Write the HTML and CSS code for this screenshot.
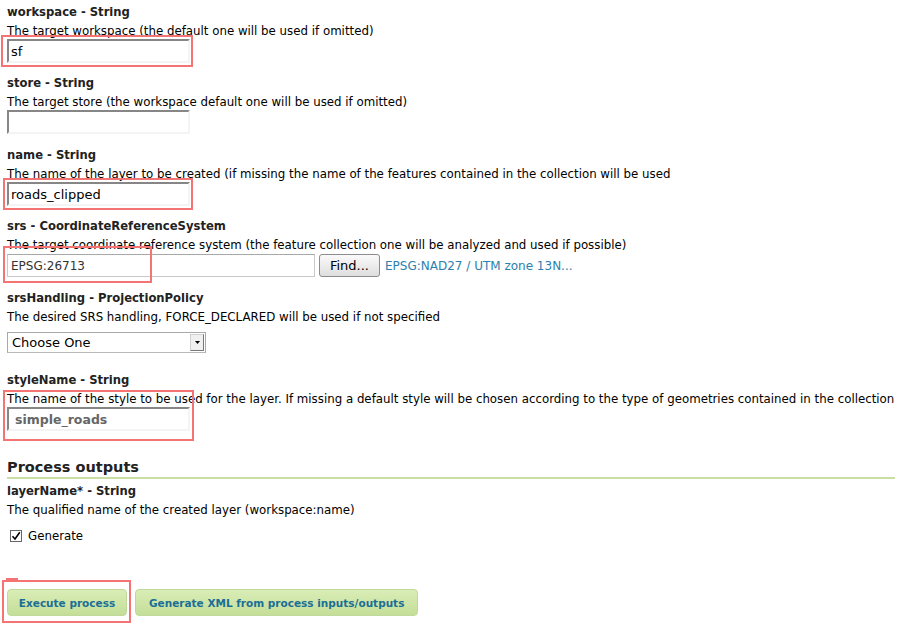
FILE: index.html
```html
<!DOCTYPE html>
<html>
<head>
<meta charset="utf-8">
<link rel="stylesheet" href="styles.css">
</head>
<body>
<div class="page">
  <div class="field short">
    <div class="title">workspace - String</div>
    <div class="desc">The target workspace (the default one will be used if omitted)</div>
    <input class="text" type="text" value="sf">
  </div>
  <div class="field">
    <div class="title">store - String</div>
    <div class="desc">The target store (the workspace default one will be used if omitted)</div>
    <input class="text" type="text" value="">
  </div>
  <div class="field short">
    <div class="title">name - String</div>
    <div class="desc">The name of the layer to be created (if missing the name of the features contained in the collection will be used</div>
    <input class="text" type="text" value="roads_clipped">
  </div>
  <div class="field">
    <div class="title">srs - CoordinateReferenceSystem</div>
    <div class="desc">The target coordinate reference system (the feature collection one will be analyzed and used if possible)</div>
    <div class="srs-row">
      <input class="text srs" type="text" value="EPSG:26713">
      <button class="find">Find...</button>
      <a class="crs-link" href="#">EPSG:NAD27 / UTM zone 13N...</a>
    </div>
  </div>
  <div class="field handling">
    <div class="title">srsHandling - ProjectionPolicy</div>
    <div class="desc">The desired SRS handling, FORCE_DECLARED will be used if not specified</div>
    <div class="select">
      <span class="select-label">Choose One</span>
      <span class="select-arrow"><svg width="5" height="3" viewBox="0 0 5 3"><path d="M0 0h5L2.5 3z" fill="#000"/></svg></span>
    </div>
  </div>
  <div class="field">
    <div class="title">styleName - String</div>
    <div class="desc">The name of the style to be used for the layer. If missing a default style will be chosen according to the type of geometries contained in the collection</div>
    <input class="text style" type="text" value="simple_roads">
  </div>

  <h2 class="section">Process outputs</h2>
  <div class="output">
    <div class="title">layerName* - String</div>
    <div class="desc">The qualified name of the created layer (workspace:name)</div>
    <label class="check"><span class="box"><svg width="10" height="10" viewBox="0 0 10 10"><path d="M1.5 5.2 L4 8 L8.8 1.2" fill="none" stroke="#000" stroke-width="1.6"/></svg></span>Generate</label>
  </div>

  <div class="actions">
    <button class="action exec">Execute process</button>
    <button class="action">Generate XML from process inputs/outputs</button>
  </div>
</div>

<div class="mark m1"></div>
<div class="mark m2"></div>
<div class="mark m3"></div>
<div class="mark m4"></div>
<div class="mark m5"></div>
<div class="mark m5s"></div>
</body>
</html>
```
FILE: styles.css
```css
html, body {
  margin: 0;
  padding: 0;
  background: #fff;
}
body {
  font-family: "DejaVu Sans", Verdana, sans-serif;
  font-size: 11.8px;
  color: #000;
  position: relative;
  width: 903px;
  height: 627px;
  overflow: hidden;
}
.page {
  padding: 3px 7px 0 7px;
}
.field {
  height: 72px;
}
.field.short {
  height: 71px;
}
.field.handling {
  height: 82px;
}
.title {
  font-weight: bold;
  font-size: 11.6px;
  color: #222;
  line-height: 18px;
  height: 18px;
  white-space: nowrap;
}
.desc {
  line-height: 20px;
  height: 18px;
  white-space: nowrap;
}
.text {
  display: block;
  box-sizing: border-box;
  width: 183px;
  height: 24px;
  margin: 0;
  padding: 0 0 0 2px;
  border: 2px solid #f0f0f0;
  border-top-color: #868686;
  border-left-color: #868686;
  border-right-color: #f4f4f4;
  border-bottom-color: #f4f4f4;
  font-family: "DejaVu Sans", Verdana, sans-serif;
  font-size: 13px;
  color: #000;
  background: #fff;
  outline: none;
}
.srs-row {
  display: flex;
  align-items: center;
  margin-top: 1px;
}
.text.srs {
  width: 308px;
  height: 23px;
  border: 1px solid #c9c9c9;
  border-top-color: #a8a8a8;
  font-size: 12px;
  color: #333;
  padding-left: 3px;
}
.find {
  margin-left: 4px;
  height: 23px;
  width: 61px;
  padding: 0;
  border: 1px solid #8c8c8c;
  border-radius: 3px;
  background: linear-gradient(#fafafa, #dedede);
  font-family: "DejaVu Sans", Verdana, sans-serif;
  font-size: 13px;
  color: #000;
}
.crs-link {
  margin-left: 5px;
  color: #2b7fae;
  text-decoration: none;
  font-size: 12px;
}
.select {
  margin-top: 7px;
  box-sizing: border-box;
  width: 199px;
  height: 21px;
  border: 1px solid #a9a9a9;
  border-bottom-color: #b9b9b9;
  display: flex;
  align-items: center;
  justify-content: space-between;
  padding-left: 4px;
  background: #fff;
}
.select-label {
  font-size: 13px;
  color: #000;
}
.select-arrow {
  box-sizing: border-box;
  width: 14px;
  height: 17px;
  margin-right: 1px;
  border: 1px solid #d0d0d0;
  border-right-color: #777;
  border-bottom-color: #777;
  background: #f0f0f0;
  display: flex;
  align-items: center;
  justify-content: center;
}
.text.style {
  font-weight: bold;
  color: #666;
  font-size: 12.5px;
  padding-left: 6px;
}
.section {
  margin: 15px 0 0 0;
  font-size: 14.5px;
  line-height: 18px;
  height: 18px;
  font-weight: bold;
  color: #222;
  padding-bottom: 1px;
  border-bottom: 2px solid #c8dea2;
  width: 888px;
}
.output {
  padding-top: 3px;
}
.check {
  display: flex;
  align-items: center;
  margin-top: 9px;
  margin-left: 3px;
  line-height: 18px;
}
.box {
  box-sizing: border-box;
  width: 12px;
  height: 12px;
  border: 1px solid #666;
  background: #fff;
  margin-right: 6px;
  display: flex;
  align-items: center;
  justify-content: center;
}
.actions {
  display: flex;
  gap: 8px;
  margin-top: 44px;
}
.action {
  height: 27px;
  padding: 0 13px;
  border: 1px solid #c0d99a;
  border-radius: 4px;
  background: linear-gradient(#d9edb6, #c4de98);
  font-family: "DejaVu Sans", Verdana, sans-serif;
  font-size: 10.5px;
  font-weight: bold;
  color: #1b6e96;
}
.action.exec {
  width: 120px;
  padding: 0;
}
.mark {
  position: absolute;
  border: 2px solid #f47474;
  box-sizing: border-box;
}
.m1 { left: 1px; top: 35px; width: 192px; height: 32px; }
.m2 { left: 3px; top: 178px; width: 190px; height: 32px; }
.m3 { left: 3px; top: 246px; width: 149px; height: 37px; }
.m4 { left: 3px; top: 390px; width: 191px; height: 51px; }
.m5 { left: 2px; top: 580px; width: 129px; height: 43px; }
.m5s { left: 6px; top: 578px; width: 12px; height: 2px; border: 0; border-top: 2px solid #f47474; }
```
